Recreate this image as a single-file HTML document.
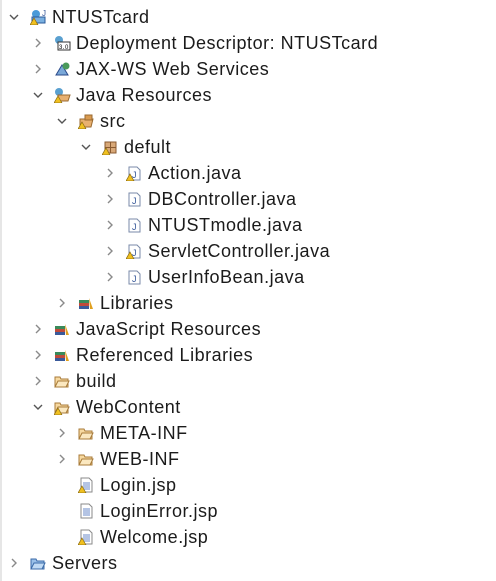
<!DOCTYPE html>
<html><head><meta charset="utf-8"><style>
body{margin:0;width:496px;height:581px;background:#fff;position:relative;overflow:hidden;font-family:"Liberation Sans",sans-serif;font-size:18px;letter-spacing:0.5px;color:#1b1b1b}
.edge{position:absolute;left:0;top:0;width:2px;height:581px;background:#e6e6e6}
.r{position:absolute;height:26px;line-height:26px;white-space:nowrap}
.r svg{position:absolute;top:5px}
.t{position:absolute;top:0}
</style></head><body>
<div class="edge"></div>
<svg width="0" height="0" style="position:absolute">
<defs>
<g id="cr"><polyline points="6,4 10,8 6,12" fill="none" stroke="#8a8a8a" stroke-width="1.4"/></g>
<g id="cd"><polyline points="4,6 8,10 12,6" fill="none" stroke="#555" stroke-width="1.4"/></g>
<g id="fold"><path d="M1,4h5l1,2h7v8H1z" fill="#f7d9a0" stroke="#a87b3a"/><path d="M1,14l3-6h11l-3,6z" fill="#fbe8c0" stroke="#a87b3a"/></g>
<g id="lib"><rect x="1" y="5" width="10" height="3" fill="#3a8a5a"/><rect x="1" y="8" width="10" height="3" fill="#c04a3a"/><rect x="1" y="11" width="10" height="3" fill="#3a5a9a"/><path d="M11,3l4,11h-3z" fill="#e0a020"/></g>
<g id="jf"><path d="M3,2h8l3,3v10H3z" fill="#fff" stroke="#7a8aa8"/><text x="6" y="13" font-size="9" fill="#3a5a9a" font-family="Liberation Sans">J</text></g>
<g id="jsp"><path d="M3,1h8l3,3v11H3z" fill="#fff" stroke="#8a8a8a"/><path d="M5,6h7M5,8h7M5,10h7M5,12h7" stroke="#6a8ac8"/></g>
<g id="warn"><path d="M4,9l4,7H0z" fill="#f0c020" stroke="#8a6a10" stroke-width=".7"/></g>
<g id="pkg"><rect x="3" y="3" width="11" height="11" fill="#d8a878" stroke="#8a5a30"/><path d="M8.5,3v11M3,8.5h11" stroke="#8a5a30"/></g>
</defs></svg>

<div class="r" style="top:4px;left:6px"><svg width="16" height="16"><use href="#cd"/></svg><svg style="left:24px" width="18" height="16"><circle cx="6" cy="5" r="4" fill="#4a9ad8"/><path d="M2,8h13v6H2z" fill="#7ab0e0" stroke="#2a5a9a"/><text x="12" y="7" font-size="8" fill="#3a5a9a">J</text><use href="#warn"/></svg><span class="t" style="left:46px">NTUSTcard</span></div>
<div class="r" style="top:30px;left:30px"><svg width="16" height="16"><use href="#cr"/></svg><svg style="left:24px" width="18" height="16"><circle cx="5" cy="5" r="4" fill="#5aa0d0"/><rect x="4" y="7" width="12" height="8" fill="#fff" stroke="#333"/><text x="5" y="14" font-size="6" font-family="Liberation Sans">3.0</text></svg><span class="t" style="left:46px">Deployment Descriptor: NTUSTcard</span></div>
<div class="r" style="top:56px;left:30px"><svg width="16" height="16"><use href="#cr"/></svg><svg style="left:24px" width="18" height="16"><path d="M2,14l6-10 6,10z" fill="#7aa8d8" stroke="#2a4a8a"/><circle cx="12" cy="5" r="3.5" fill="#4a9a5a"/></svg><span class="t" style="left:46px">JAX-WS Web Services</span></div>
<div class="r" style="top:82px;left:30px"><svg width="16" height="16"><use href="#cd"/></svg><svg style="left:24px" width="18" height="16"><circle cx="5" cy="5" r="4" fill="#5aa0d0"/><path d="M4,8h12l-2,6H4z" fill="#e8b070" stroke="#9a6a30"/><use href="#warn"/></svg><span class="t" style="left:46px">Java Resources</span></div>
<div class="r" style="top:108px;left:54px"><svg width="16" height="16"><use href="#cd"/></svg><svg style="left:24px" width="18" height="16"><path d="M2,6h13l-2,8H2z" fill="#e8b070" stroke="#9a6a30"/><path d="M7,2h7v5H7z" fill="#d89a50" stroke="#9a6a30"/><use href="#warn"/></svg><span class="t" style="left:46px">src</span></div>
<div class="r" style="top:134px;left:78px"><svg width="16" height="16"><use href="#cd"/></svg><svg style="left:24px" width="18" height="16"><use href="#pkg"/><use href="#warn"/></svg><span class="t" style="left:46px">defult</span></div>
<div class="r" style="top:160px;left:102px"><svg width="16" height="16"><use href="#cr"/></svg><svg style="left:24px" width="18" height="16"><use href="#jf"/><use href="#warn"/></svg><span class="t" style="left:46px">Action.java</span></div>
<div class="r" style="top:186px;left:102px"><svg width="16" height="16"><use href="#cr"/></svg><svg style="left:24px" width="18" height="16"><use href="#jf"/></svg><span class="t" style="left:46px">DBController.java</span></div>
<div class="r" style="top:212px;left:102px"><svg width="16" height="16"><use href="#cr"/></svg><svg style="left:24px" width="18" height="16"><use href="#jf"/></svg><span class="t" style="left:46px">NTUSTmodle.java</span></div>
<div class="r" style="top:238px;left:102px"><svg width="16" height="16"><use href="#cr"/></svg><svg style="left:24px" width="18" height="16"><use href="#jf"/><use href="#warn"/></svg><span class="t" style="left:46px">ServletController.java</span></div>
<div class="r" style="top:264px;left:102px"><svg width="16" height="16"><use href="#cr"/></svg><svg style="left:24px" width="18" height="16"><use href="#jf"/></svg><span class="t" style="left:46px">UserInfoBean.java</span></div>
<div class="r" style="top:290px;left:54px"><svg width="16" height="16"><use href="#cr"/></svg><svg style="left:24px" width="18" height="16"><use href="#lib"/></svg><span class="t" style="left:46px">Libraries</span></div>
<div class="r" style="top:316px;left:30px"><svg width="16" height="16"><use href="#cr"/></svg><svg style="left:24px" width="18" height="16"><use href="#lib"/></svg><span class="t" style="left:46px">JavaScript Resources</span></div>
<div class="r" style="top:342px;left:30px"><svg width="16" height="16"><use href="#cr"/></svg><svg style="left:24px" width="18" height="16"><use href="#lib"/></svg><span class="t" style="left:46px">Referenced Libraries</span></div>
<div class="r" style="top:368px;left:30px"><svg width="16" height="16"><use href="#cr"/></svg><svg style="left:24px" width="18" height="16"><use href="#fold"/></svg><span class="t" style="left:46px">build</span></div>
<div class="r" style="top:394px;left:30px"><svg width="16" height="16"><use href="#cd"/></svg><svg style="left:24px" width="18" height="16"><use href="#fold"/><use href="#warn"/></svg><span class="t" style="left:46px">WebContent</span></div>
<div class="r" style="top:420px;left:54px"><svg width="16" height="16"><use href="#cr"/></svg><svg style="left:24px" width="18" height="16"><use href="#fold"/></svg><span class="t" style="left:46px">META-INF</span></div>
<div class="r" style="top:446px;left:54px"><svg width="16" height="16"><use href="#cr"/></svg><svg style="left:24px" width="18" height="16"><use href="#fold"/></svg><span class="t" style="left:46px">WEB-INF</span></div>
<div class="r" style="top:472px;left:54px"><svg style="left:24px" width="18" height="16"><use href="#jsp"/><use href="#warn"/></svg><span class="t" style="left:46px">Login.jsp</span></div>
<div class="r" style="top:498px;left:54px"><svg style="left:24px" width="18" height="16"><use href="#jsp"/></svg><span class="t" style="left:46px">LoginError.jsp</span></div>
<div class="r" style="top:524px;left:54px"><svg style="left:24px" width="18" height="16"><use href="#jsp"/><use href="#warn"/></svg><span class="t" style="left:46px">Welcome.jsp</span></div>
<div class="r" style="top:550px;left:6px"><svg width="16" height="16"><use href="#cr"/></svg><svg style="left:24px" width="18" height="16"><path d="M1,4h5l1,2h7v8H1z" fill="#9ac0e8" stroke="#3a6aa8"/><path d="M1,14l3-6h11l-3,6z" fill="#c0daf4" stroke="#3a6aa8"/></svg><span class="t" style="left:46px">Servers</span></div>
</body></html>
